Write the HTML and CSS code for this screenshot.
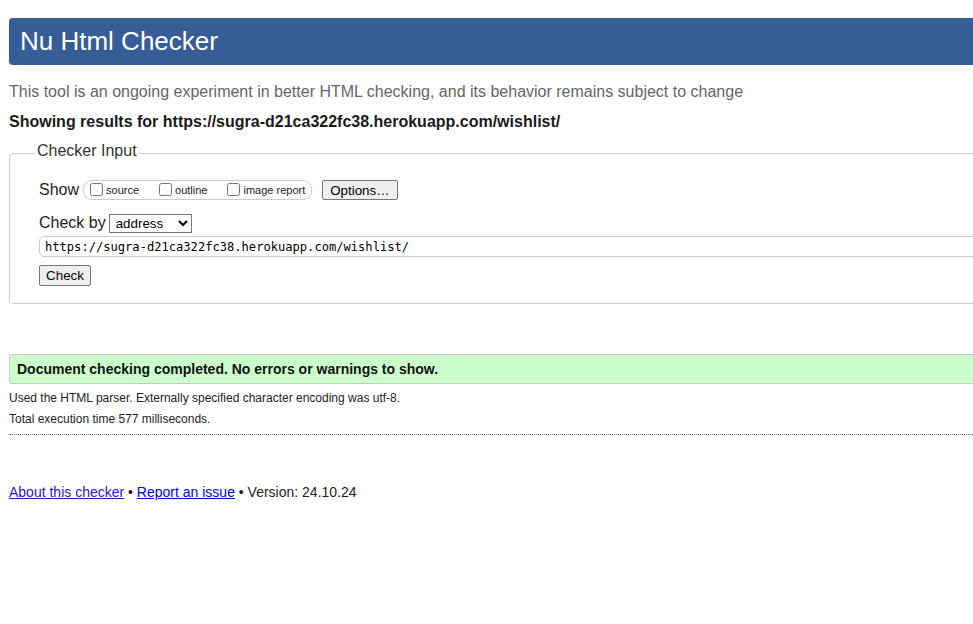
FILE: index.html
```html
<!DOCTYPE html>
<html lang="en">
<head>
<meta charset="utf-8">
<title>Showing results for https://sugra-d21ca322fc38.herokuapp.com/wishlist/ - Nu Html Checker</title>
<link rel="stylesheet" href="styles.css">
</head>
<body>
<div class="page">
  <h1 class="title">Nu Html Checker</h1>
  <p class="intro">This tool is an ongoing experiment in better HTML checking, and its behavior remains subject to change</p>
  <p class="showing">Showing results for https://sugra-d21ca322fc38.herokuapp.com/wishlist/</p>

  <form class="checker-form">
    <fieldset class="checker-input">
      <legend class="legend">Checker Input</legend>
      <div class="row row-show">
        <span class="row-label">Show</span>
        <span class="show-group">
          <label class="opt"><input type="checkbox" class="cb">source</label>
          <label class="opt"><input type="checkbox" class="cb">outline</label>
          <label class="opt opt-last"><input type="checkbox" class="cb">image report</label>
        </span>
        <button type="button" class="btn btn-options">Options…</button>
      </div>
      <div class="row row-checkby">
        <span class="row-label">Check by</span>
        <select class="sel">
          <option>address</option>
          <option>file upload</option>
          <option>text input</option>
        </select>
      </div>
      <input type="url" class="url" value="https://sugra-d21ca322fc38.herokuapp.com/wishlist/">
      <div class="row-submit">
        <button type="button" class="btn btn-check">Check</button>
      </div>
    </fieldset>
  </form>

  <div class="success">Document checking completed. No errors or warnings to show.</div>
  <p class="details">Used the HTML parser. Externally specified character encoding was utf-8.</p>
  <p class="details">Total execution time 577 milliseconds.</p>
  <div class="separator"></div>

  <p class="footer"><a class="link link-visited" href="#about">About this checker</a> • <a class="link" href="#issue">Report an issue</a> • Version: 24.10.24</p>
</div>
</body>
</html>
```

FILE: styles.css
```css
html {
  overflow: hidden;
}

body {
  margin: 0;
  background: #ffffff;
  color: #222222;
  font-family: "Liberation Sans", Arial, sans-serif;
}

.page {
  width: 1400px;
  padding: 18px 0 0 9px;
}

.title {
  margin: 0;
  height: 47px;
  box-sizing: border-box;
  padding-left: 11px;
  background: #365d95;
  color: #ffffff;
  font-size: 26px;
  font-weight: normal;
  line-height: 46px;
  border-radius: 4px 0 0 4px;
}

.intro {
  margin: 17px 0 0;
  font-size: 16px;
  line-height: 20px;
  color: #666666;
}

.showing {
  margin: 10px 0 0;
  font-size: 16px;
  line-height: 20px;
  font-weight: bold;
  color: #1a1a1a;
}

.checker-form {
  margin: 9px 0 0;
}

.checker-input {
  margin: 0;
  padding: 0 0 17px 29px;
  border: 1px solid #cccccc;
  border-radius: 4px;
  min-width: 0;
}

.legend {
  margin-left: -4px;
  padding: 0 2px 4px;
  font-size: 16px;
  line-height: 20px;
  color: #333333;
}

.row {
  display: flex;
  align-items: center;
  height: 20px;
}

.row-show {
  margin-top: 15px;
}

.row-checkby {
  margin-top: 13px;
}

.row-label {
  font-size: 16px;
  line-height: 20px;
  color: #222222;
}

.show-group {
  display: inline-flex;
  align-items: center;
  height: 18px;
  margin-left: 4px;
  padding: 0 6px 0 2px;
  border: 1px solid #cccccc;
  border-radius: 9px;
}

.opt {
  display: inline-flex;
  align-items: flex-end;
  font-size: 11px;
  line-height: 13px;
  color: #222222;
  margin-right: 16px;
}

.opt-last {
  margin-right: 0;
}

.cb {
  width: 13px;
  height: 13px;
  margin: 0 3px 1px 4px;
}

.btn {
  font-family: "Liberation Sans", Arial, sans-serif;
  font-size: 13.33px;
  line-height: 15px;
  color: #000000;
  background: #efefef;
  border: 1px solid #767676;
  border-radius: 2px;
  padding: 1px 7px;
  height: 20px;
  box-sizing: border-box;
}

.btn-options {
  margin-left: 10px;
}

.sel {
  margin-left: 3px;
  width: 83px;
  height: 19px;
  font-family: "Liberation Sans", Arial, sans-serif;
  font-size: 13.33px;
  color: #000000;
  background: #ffffff;
  border: 1px solid #767676;
  border-radius: 0;
  padding: 0 0 0 2px;
}

.url {
  display: block;
  margin: 3px 0 0;
  width: 1300px;
  height: 21px;
  box-sizing: border-box;
  padding: 0 5px;
  border: 1px solid #cccccc;
  border-radius: 5px;
  font-family: "DejaVu Sans Mono", "Liberation Mono", monospace;
  font-size: 12.1px;
  color: #000000;
  background: #ffffff;
}

.row-submit {
  margin-top: 8px;
}

.btn-check {
  height: 21px;
  width: 52px;
  padding: 1px 0;
}

.success {
  margin-top: 50px;
  padding: 5px 7px;
  border: 1px solid #c8c8c8;
  border-radius: 3px 0 0 3px;
  background: #ccffcc;
  font-size: 14px;
  line-height: 18px;
  font-weight: bold;
  color: #111111;
}

.details {
  margin: 0;
  font-size: 12px;
  line-height: 21px;
  color: #222222;
}

.success + .details {
  margin-top: 4px;
}

.separator {
  margin-top: 4px;
  border-top: 1px dotted #666666;
}

.footer {
  margin: 48px 0 0;
  font-size: 14px;
  line-height: 18px;
  color: #222222;
}

.link {
  color: #0000ee;
  text-decoration: underline;
}

.link-visited {
  color: #3311cc;
}
```
